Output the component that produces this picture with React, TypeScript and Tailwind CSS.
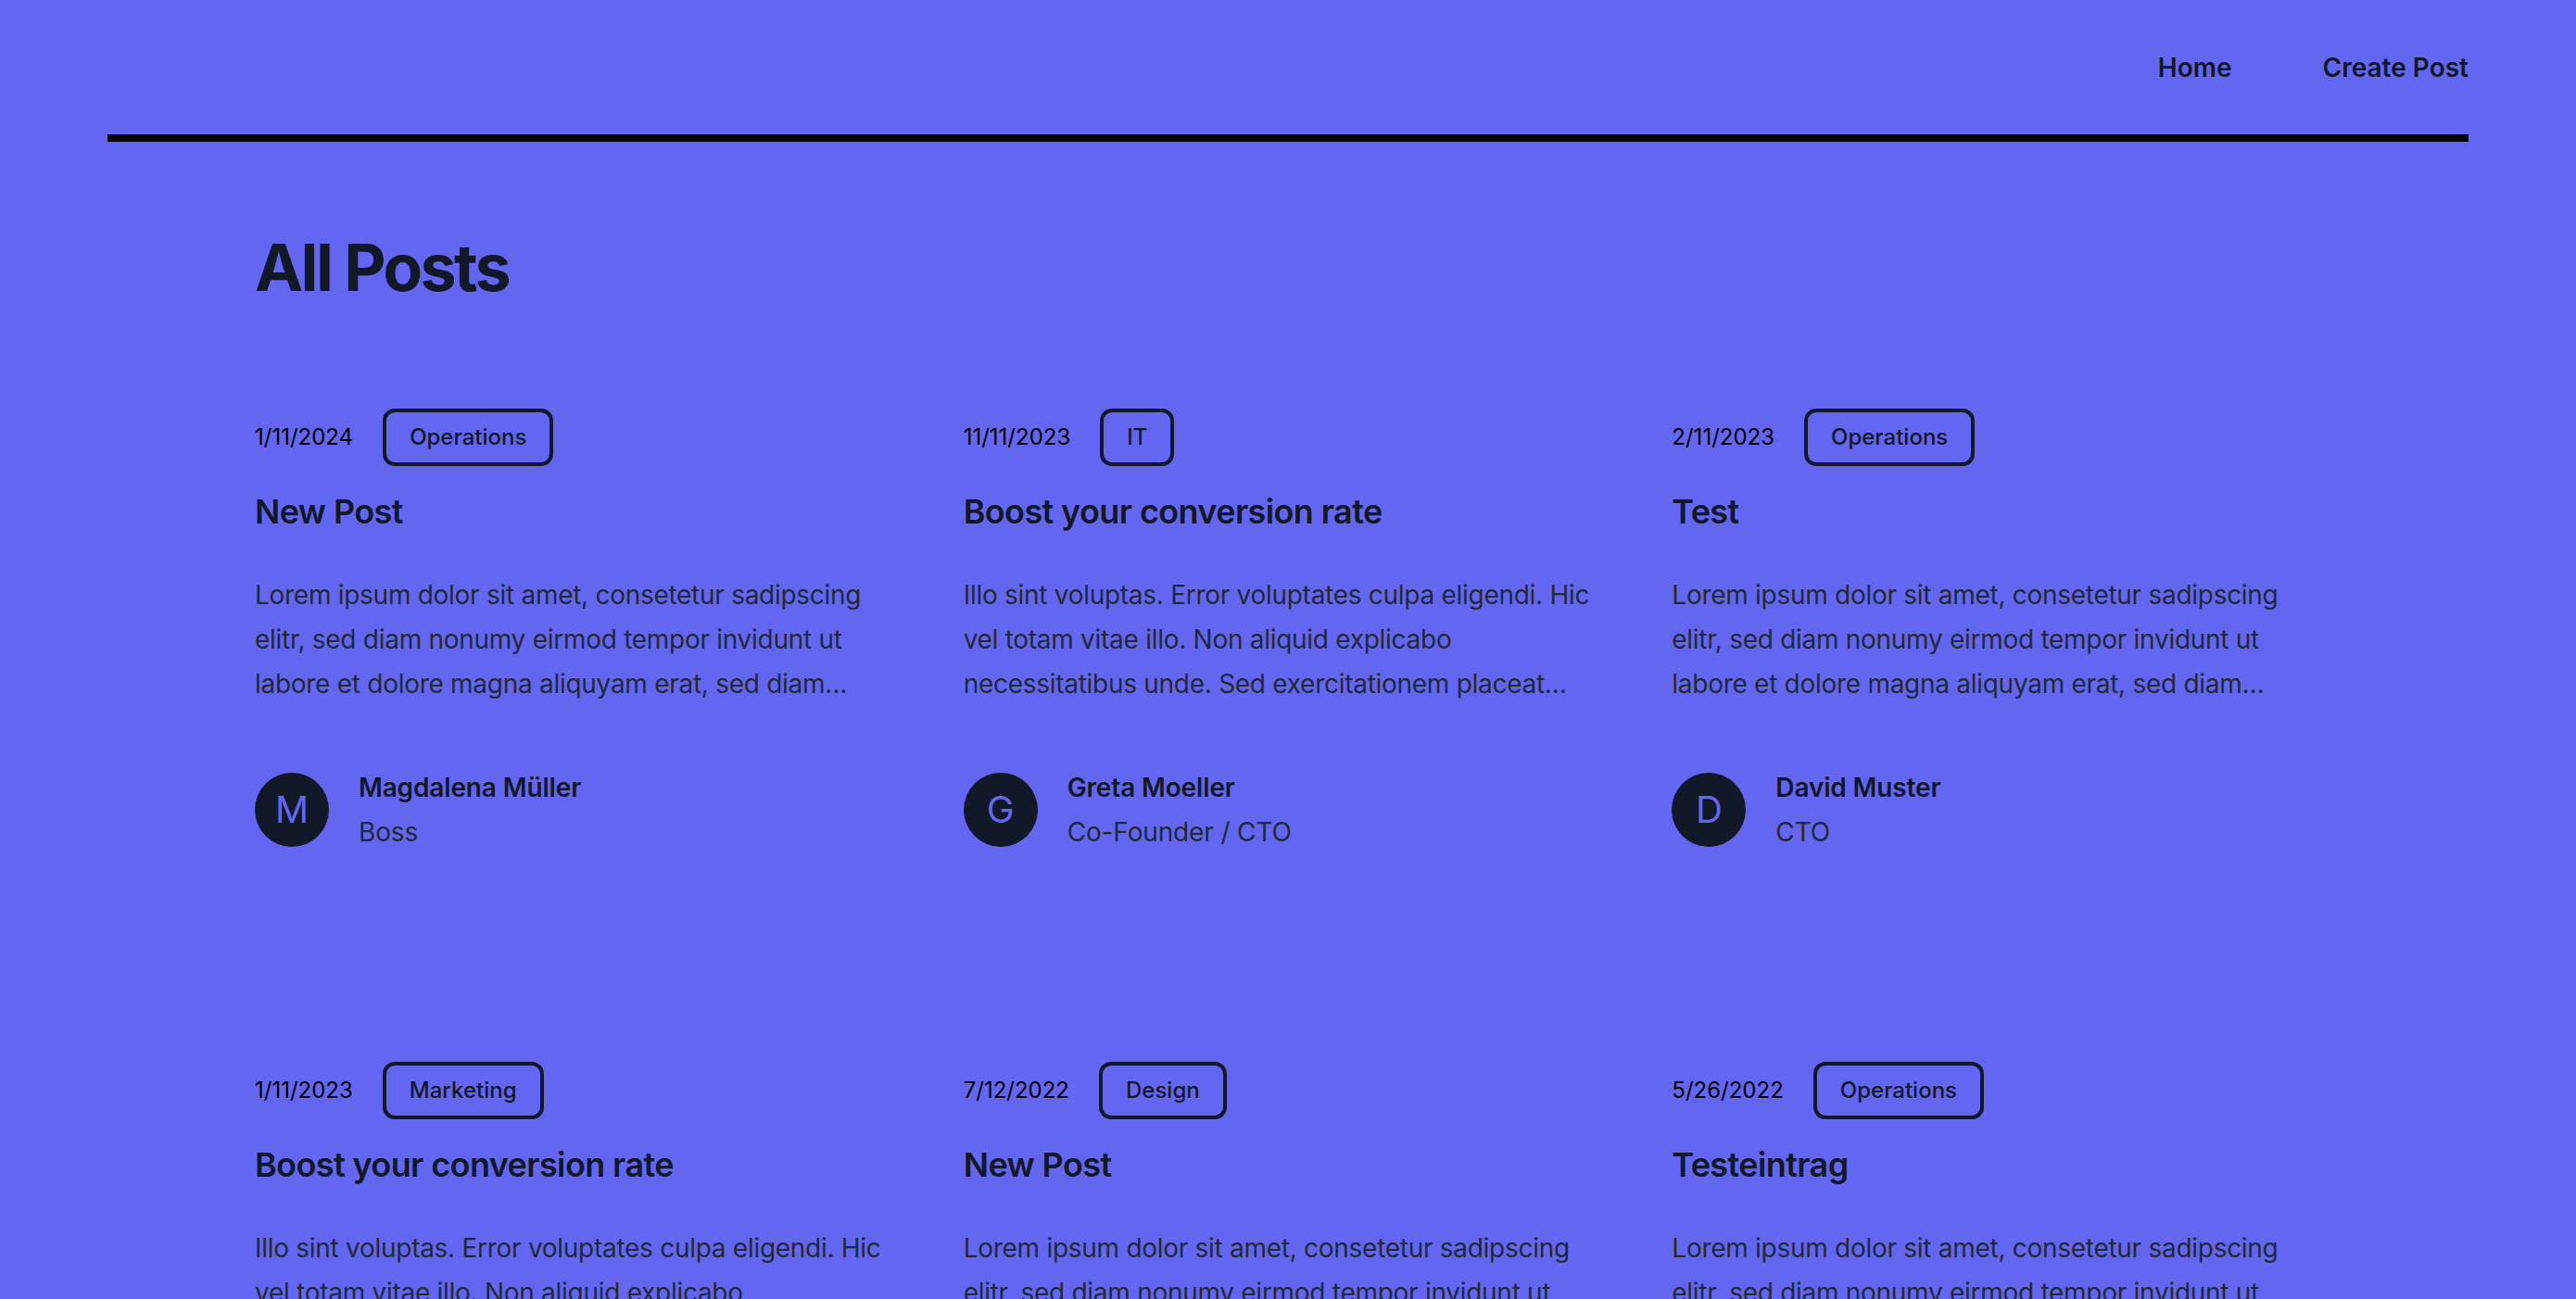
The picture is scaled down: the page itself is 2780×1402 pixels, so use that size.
import React from 'react';

type Post = {
  date: string;
  category: string;
  title: string;
  excerpt: string;
  author: string;
  role: string;
};

const lorem =
  'Lorem ipsum dolor sit amet, consetetur sadipscing elitr, sed diam nonumy eirmod tempor invidunt ut labore et dolore magna aliquyam erat, sed diam voluptua. At vero eos et accusam et justo duo dolores et ea rebum.';
const illo =
  'Illo sint voluptas. Error voluptates culpa eligendi. Hic vel totam vitae illo. Non aliquid explicabo necessitatibus unde. Sed exercitationem placeat consectetur. Pariatur quidem in magnam.';

const posts: Post[] = [
  { date: '1/11/2024', category: 'Operations', title: 'New Post', excerpt: lorem, author: 'Magdalena Müller', role: 'Boss' },
  { date: '11/11/2023', category: 'IT', title: 'Boost your conversion rate', excerpt: illo, author: 'Greta Moeller', role: 'Co-Founder / CTO' },
  { date: '2/11/2023', category: 'Operations', title: 'Test', excerpt: lorem, author: 'David Muster', role: 'CTO' },
  { date: '1/11/2023', category: 'Marketing', title: 'Boost your conversion rate', excerpt: illo, author: 'Greta Moeller', role: 'Co-Founder / CTO' },
  { date: '7/12/2022', category: 'Design', title: 'New Post', excerpt: lorem, author: 'Magdalena Müller', role: 'Boss' },
  { date: '5/26/2022', category: 'Operations', title: 'Testeintrag', excerpt: lorem, author: 'David Muster', role: 'CTO' },
];

function PostCard({ post }: { post: Post }) {
  return (
    <article className="flex flex-col">
      <div className="flex items-center gap-8">
        <time className="text-[24px] leading-8 text-black">{post.date}</time>
        <span className="rounded-[13px] border-4 border-[#111827] px-[25px] py-[11px] text-[24px] font-medium leading-8 text-[#111827]">
          {post.category}
        </span>
      </div>
      <h3 className="mt-[25px] text-[36px] font-semibold leading-[48px] tracking-[-0.017em] text-[#111827]">{post.title}</h3>
      <p className="mt-[42px] line-clamp-3 text-[28px] leading-[48px] tracking-[-0.01em] text-[#1f2937]">{post.excerpt}</p>
      <div className="mt-16 flex items-center gap-8">
        <div className="flex h-20 w-20 shrink-0 items-center justify-center rounded-full bg-[#111827] text-[40px] text-[#6366f1]">
          {post.author.charAt(0)}
        </div>
        <div className="text-[28px] leading-[48px] tracking-[-0.005em]">
          <p className="font-semibold text-[#111827]">{post.author}</p>
          <p className="text-[#1f2937]">{post.role}</p>
        </div>
      </div>
    </article>
  );
}

export default function App() {
  return (
    <div className="min-h-screen bg-[#6366f1] font-[Inter,sans-serif] text-[#111827]">
      <header className="px-[116px]">
        <nav className="flex h-[153px] items-center justify-end gap-[98px] border-b-8 border-black text-[28px] font-semibold">
          <a href="#">Home</a>
          <a href="#">Create Post</a>
        </nav>
      </header>

      <main className="px-[275px] pb-24">
        <h1 className="mt-[101px] text-[70px] font-bold leading-none tracking-[-0.038em] text-[#111827]">All Posts</h1>
        <div className="mt-[117px] grid grid-cols-3 gap-x-16 gap-y-[224px]">
          {posts.map((post, i) => (
            <PostCard key={i} post={post} />
          ))}
        </div>
      </main>
    </div>
  );
}
